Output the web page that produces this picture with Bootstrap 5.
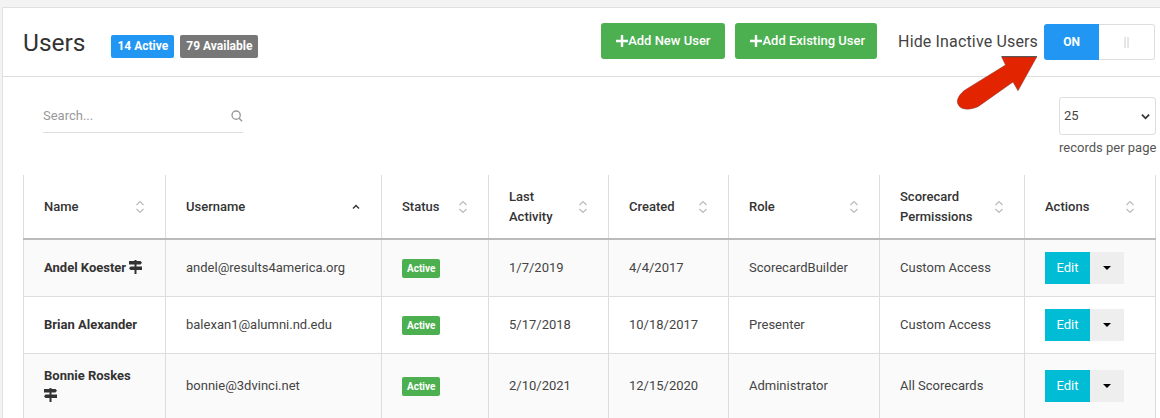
<!DOCTYPE html>
<html lang="en">
<head>
<meta charset="utf-8">
<title>Users</title>
<link href="https://cdn.jsdelivr.net/npm/bootstrap@5.3.0/dist/css/bootstrap.min.css" rel="stylesheet">
<style>
html,body{height:418px;overflow:hidden}
body{background:#f3f3f3;font-family:Roboto,"Liberation Sans",sans-serif;color:#333;font-size:13px;padding:7px 0 0 2px}
.panel{position:relative;background:#fff;border:1px solid #e0e0e0;border-right:0;border-bottom:0;height:420px;overflow:hidden}
.panel-head{height:69px;border-bottom:1px solid #ddd;padding:0 5px 0 20px}
.panel-title{font-size:24.5px;font-weight:400;line-height:1;margin:2px 26px 0 0;color:#333}
.tags{margin-top:8px}
.tag{display:inline-block;font-size:12px;font-weight:700;color:#fff;line-height:15px;padding:4px 6px;border-radius:2px;margin-right:6px}
.tag-blue{background:#2196f3}
.tag-grey{background:#777}
.add-btn{background:#4caf50;border:0;border-radius:3px;color:#fff;font-size:13px;font-weight:500;height:36px;padding:0 15px;display:flex;align-items:center;margin-top:-2px}
.add-btn:hover{background:#4caf50;color:#fff}
.gap-btn{margin-left:10px;padding-right:12px}
.hide-label{font-size:16px;color:#444;margin:0 6px 0 21px;letter-spacing:.15px}
.toggle-on{width:55px;height:36px;background:#2196f3;color:#fff;font-size:12px;font-weight:700;border-radius:3px 0 0 3px}
.toggle-off{width:56px;height:36px;border:1px solid #ddd;border-left:0;border-radius:0 3px 3px 0;background:#fff;color:#ccc;font-size:12px}
.tools{height:98px;padding:20px 4px 0 40px}
.search-box{width:200px;height:36px;border-bottom:1px solid #ddd;color:#999;font-size:13px;padding-top:3px}
.per-page{width:97px}
.per-select{height:38px;border:1px solid #ddd;border-radius:3px;font-size:13px;color:#444;padding:0 4px;background-image:url("data:image/svg+xml,%3csvg xmlns='http://www.w3.org/2000/svg' viewBox='0 0 10 7'%3e%3cpath fill='none' stroke='%23333' stroke-width='2' d='M1 1.500 5 5.500 9 1.500'/%3e%3c/svg%3e");background-position:right 5px center;background-size:9px 7px}
.per-text{font-size:13px;color:#555;white-space:nowrap;margin-top:3px}
.users-table{table-layout:fixed;width:1132px;margin:0 0 0 20px;border-collapse:collapse;font-size:13px;color:#444}
.users-table th,.users-table td{border:1px solid #ddd;padding:0 20px;vertical-align:middle}
.users-table tr>:first-child{border-left:1px solid #ddd}
.users-table th{height:64px;border-top:0;border-bottom:2px solid #bbb;font-weight:500;color:#333;line-height:20px;position:relative;padding-right:30px}
.users-table tbody td{height:57px}
.users-table tbody tr:nth-child(odd) td{background:#fafafa}
.users-table tbody tr.tall td{height:65px}
.person{font-weight:700;color:#333;line-height:20px}
.c1{width:142px}.c2{width:216px}.c3{width:107px}.c4{width:120px}.c5{width:120px}.c6{width:151px}.c7{width:145px}.c8{width:131px}
.sorter{position:absolute;right:20px;top:50%;margin-top:-8px;width:10px;height:16px}
.active-tag{display:inline-block;background:#4caf50;color:#fff;font-size:10px;font-weight:700;line-height:13px;padding:3px 5px;border-radius:2px;vertical-align:middle}
.edit-btn{background:#00bcd4;color:#fff;font-size:13px;width:45px;height:32px}
.caret-btn{background:#eee;width:34px;height:32px}
.caret-shape{width:0;height:0;border:4px solid transparent;border-top:4px solid #000;border-bottom:0}
.sign{width:13px;height:14px;vertical-align:-2px}
.arrow{position:absolute;left:950px;top:38px;width:90px;height:66px}
</style>
</head>
<body>
<div class="panel">
  <div class="panel-head d-flex align-items-center">
    <h1 class="panel-title">Users</h1>
    <div class="tags"><span class="tag tag-blue">14 Active</span><span class="tag tag-grey">79 Available</span></div>
    <div class="ms-auto d-flex align-items-center">
      <button class="btn add-btn" type="button"><svg width="12" height="12" viewBox="0 0 12 12"><path d="M0 6h12M6 0v12" stroke="#fff" stroke-width="2.4"/></svg>Add New User</button>
      <button class="btn add-btn gap-btn" type="button"><svg width="12" height="12" viewBox="0 0 12 12"><path d="M0 6h12M6 0v12" stroke="#fff" stroke-width="2.4"/></svg>Add Existing User</button>
      <span class="hide-label">Hide Inactive Users</span>
      <div class="d-flex">
        <div class="toggle-on d-flex align-items-center justify-content-center">ON</div>
        <div class="toggle-off d-flex align-items-center justify-content-center">||</div>
      </div>
    </div>
  </div>
  <div class="tools d-flex justify-content-between align-items-start">
    <div class="search-box d-flex justify-content-between align-items-center">
      <span>Search...</span>
      <svg width="12" height="12" viewBox="0 0 14 14" fill="none" stroke="#999" stroke-width="1.6"><circle cx="6" cy="6" r="4.800"/><path d="M9.500 9.500 13 13"/></svg>
    </div>
    <div class="per-page">
      <select class="form-select per-select"><option>25</option></select>
      <div class="per-text">records per page</div>
    </div>
  </div>
  <table class="users-table">
    <colgroup><col class="c1"><col class="c2"><col class="c3"><col class="c4"><col class="c5"><col class="c6"><col class="c7"><col class="c8"></colgroup>
    <thead>
      <tr>
        <th>Name<svg class="sorter" viewBox="0 0 10 16" fill="none" stroke="#bbb" stroke-width="1.2"><path d="M1.500 6 5 2.500 8.500 6M1.500 10 5 13.500 8.500 10"/></svg></th>
        <th>Username<svg class="sorter" viewBox="0 0 10 16" fill="none" stroke="#333" stroke-width="1.4"><path d="M2 9.500 5 6.500 8 9.500"/></svg></th>
        <th>Status<svg class="sorter" viewBox="0 0 10 16" fill="none" stroke="#bbb" stroke-width="1.2"><path d="M1.500 6 5 2.500 8.500 6M1.500 10 5 13.500 8.500 10"/></svg></th>
        <th>Last Activity<svg class="sorter" viewBox="0 0 10 16" fill="none" stroke="#bbb" stroke-width="1.2"><path d="M1.500 6 5 2.500 8.500 6M1.500 10 5 13.500 8.500 10"/></svg></th>
        <th>Created<svg class="sorter" viewBox="0 0 10 16" fill="none" stroke="#bbb" stroke-width="1.2"><path d="M1.500 6 5 2.500 8.500 6M1.500 10 5 13.500 8.500 10"/></svg></th>
        <th>Role<svg class="sorter" viewBox="0 0 10 16" fill="none" stroke="#bbb" stroke-width="1.2"><path d="M1.500 6 5 2.500 8.500 6M1.500 10 5 13.500 8.500 10"/></svg></th>
        <th>Scorecard Permissions<svg class="sorter" viewBox="0 0 10 16" fill="none" stroke="#bbb" stroke-width="1.2"><path d="M1.500 6 5 2.500 8.500 6M1.500 10 5 13.500 8.500 10"/></svg></th>
        <th>Actions<svg class="sorter" viewBox="0 0 10 16" fill="none" stroke="#bbb" stroke-width="1.2"><path d="M1.500 6 5 2.500 8.500 6M1.500 10 5 13.500 8.500 10"/></svg></th>
      </tr>
    </thead>
    <tbody>
      <tr>
        <td class="person">Andel Koester <svg class="sign" viewBox="0 0 13 14" fill="#333"><path d="M0 1h11.500L13 2.750 11.500 4.500H0zM13 6.500H1.500L0 8.250 1.500 10H13zM5.500 0h2v1h-2zM5.500 4.500h2v2h-2zM5.500 10h2v4h-2z"/></svg></td>
        <td>andel@results4america.org</td>
        <td><span class="active-tag">Active</span></td>
        <td>1/7/2019</td><td>4/4/2017</td><td>ScorecardBuilder</td><td>Custom Access</td>
        <td><div class="d-flex"><div class="edit-btn d-flex align-items-center justify-content-center">Edit</div><div class="caret-btn d-flex align-items-center justify-content-center"><span class="caret-shape"></span></div></div></td>
      </tr>
      <tr>
        <td class="person">Brian Alexander</td>
        <td>balexan1@alumni.nd.edu</td>
        <td><span class="active-tag">Active</span></td>
        <td>5/17/2018</td><td>10/18/2017</td><td>Presenter</td><td>Custom Access</td>
        <td><div class="d-flex"><div class="edit-btn d-flex align-items-center justify-content-center">Edit</div><div class="caret-btn d-flex align-items-center justify-content-center"><span class="caret-shape"></span></div></div></td>
      </tr>
      <tr class="tall">
        <td class="person">Bonnie Roskes <svg class="sign" viewBox="0 0 13 14" fill="#333"><path d="M0 1h11.500L13 2.750 11.500 4.500H0zM13 6.500H1.500L0 8.250 1.500 10H13zM5.500 0h2v1h-2zM5.500 4.500h2v2h-2zM5.500 10h2v4h-2z"/></svg></td>
        <td>bonnie@3dvinci.net</td>
        <td><span class="active-tag">Active</span></td>
        <td>2/10/2021</td><td>12/15/2020</td><td>Administrator</td><td>All Scorecards</td>
        <td><div class="d-flex"><div class="edit-btn d-flex align-items-center justify-content-center">Edit</div><div class="caret-btn d-flex align-items-center justify-content-center"><span class="caret-shape"></span></div></div></td>
      </tr>
    </tbody>
  </table>
  <svg class="arrow" viewBox="953 46 90 66"><path d="M1001.700 57H1036.700L1018 90.700 1013 82 978 106.700C970 110 960 111 957.500 103 956.500 98 961 93 965 90L1005.500 65Z" fill="#e32400" stroke="#7a3a2a" stroke-width=".5"/><path d="M1001.500 56.500H1037" stroke="#5a5a5a" stroke-width="1"/></svg>
</div>
</body>
</html>
